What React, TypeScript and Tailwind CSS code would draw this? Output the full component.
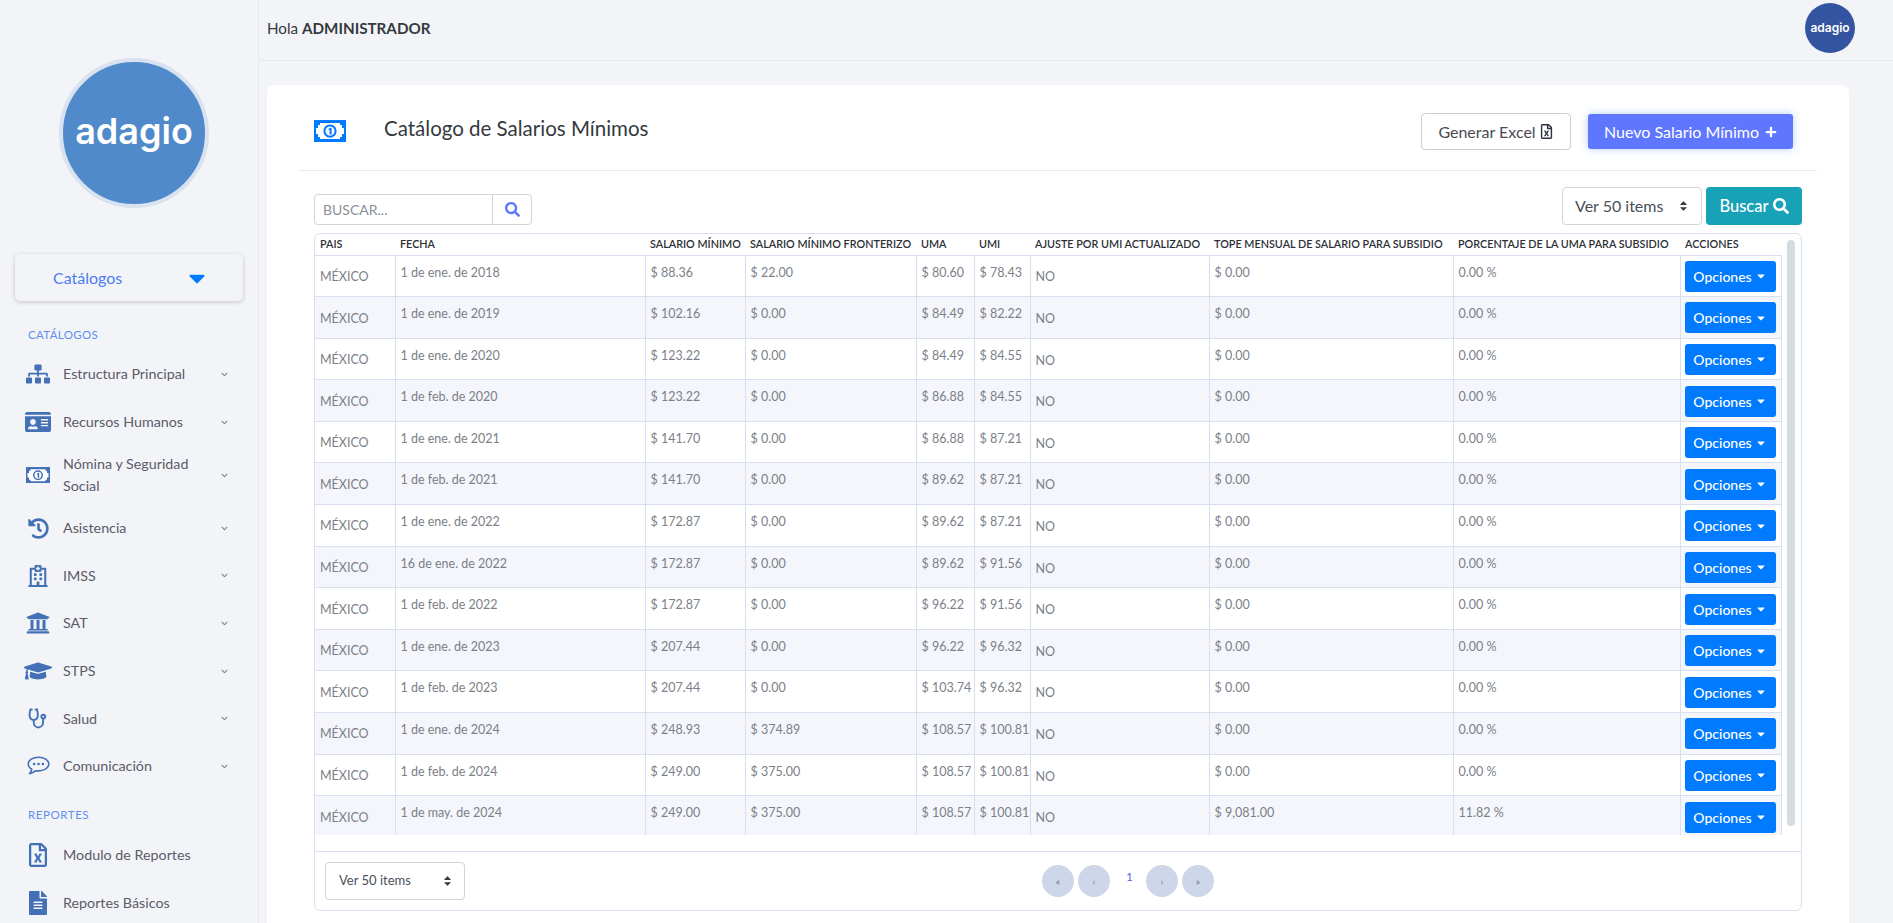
import { ComponentType, ReactNode } from "react";
import {
  FaSitemap,
  FaIdCard,
  FaHistory,
  FaRegHospital,
  FaUniversity,
  FaGraduationCap,
  FaRegFileExcel,
  FaFileAlt,
  FaSearch,
  FaPlus,
  FaCaretDown,
  FaChevronDown,
} from "react-icons/fa";

const FONT = "font-['Lato','Liberation_Sans',sans-serif]";

interface IMenu {
  label: ReactNode;
  icon: ComponentType<{ className?: string }>;
  size: string;
  chevron: boolean;
  height: string;
}

function Bill({ className }: { className?: string }) {
  return (
    <svg viewBox="0 0 32 22" width="1em" height="0.69em" className={className}>
      <rect width="32" height="22" fill="currentColor" />
      <path d="M6 3h20v2h2v3h2v6h-2v3h-2v2H6v-2H4v-3H2V8h2V5h2z" fill="#fff" />
      <circle cx="16" cy="11" r="6.6" fill="currentColor" />
      <circle cx="16" cy="11" r="4.6" fill="#fff" />
      <path d="M14.6 8.6l2-1h1v6.8h-2V9.8l-1 .4z" fill="currentColor" />
    </svg>
  );
}

function Stethoscope({ className }: { className?: string }) {
  return (
    <svg viewBox="0 0 20 22" width="0.91em" height="1em" fill="none" stroke="currentColor" strokeWidth="2" strokeLinecap="round" className={className}>
      <path d="M4 1.6H2.6C2 4 1.4 6 1.6 8c.3 2.6 2.2 4.4 4.4 4.4s4-1.8 4.3-4.4C10.6 6 10 4 9.4 1.6H8" />
      <path d="M6 12.4V15c0 3 2 5.4 4.8 5.4S15.8 18 15.8 15v-3.6" />
      <circle cx="16" cy="9" r="2" />
    </svg>
  );
}

function Speech({ className }: { className?: string }) {
  return (
    <svg viewBox="0 0 24 20" width="1em" height="0.83em" className={className}>
      <path d="M12 1.2C6 1.2 1.2 4.4 1.2 8.4c0 2.2 1.5 4.2 3.8 5.5-.3 1.5-1 2.9-2.4 4.6 2.6-.4 5-1.7 6.6-3.1 1 .2 1.8.2 2.8.2 6 0 10.8-3.2 10.8-7.2S18 1.2 12 1.2z" fill="none" stroke="currentColor" strokeWidth="1.6" strokeLinejoin="round" />
      <circle cx="7.4" cy="8.4" r="1.4" fill="currentColor" />
      <circle cx="12" cy="8.4" r="1.4" fill="currentColor" />
      <circle cx="16.6" cy="8.4" r="1.4" fill="currentColor" />
    </svg>
  );
}

const catalogos: IMenu[] = [
  { label: "Estructura Principal", icon: FaSitemap, size: "text-[24px]", chevron: true, height: "h-[48px]" },
  { label: "Recursos Humanos", icon: FaIdCard, size: "text-[26px]", chevron: true, height: "h-[48px]" },
  { label: <>Nómina y Seguridad<br />Social</>, icon: Bill, size: "text-[24px]", chevron: true, height: "h-[58px]" },
  { label: "Asistencia", icon: FaHistory, size: "text-[21px]", chevron: true, height: "h-[48px]" },
  { label: "IMSS", icon: FaRegHospital, size: "text-[22px]", chevron: true, height: "h-[47px]" },
  { label: "SAT", icon: FaUniversity, size: "text-[24px]", chevron: true, height: "h-[48px]" },
  { label: "STPS", icon: FaGraduationCap, size: "text-[28px]", chevron: true, height: "h-[48px]" },
  { label: "Salud", icon: Stethoscope, size: "text-[21px]", chevron: true, height: "h-[47px]" },
  { label: "Comunicación", icon: Speech, size: "text-[23px]", chevron: true, height: "h-[48px]" },
];

const reportes: IMenu[] = [
  { label: "Modulo de Reportes", icon: FaRegFileExcel, size: "text-[24px]", chevron: false, height: "h-[48px]" },
  { label: "Reportes Básicos", icon: FaFileAlt, size: "text-[24px]", chevron: false, height: "h-[48px]" },
];

const rows = [
  ["1 de ene. de 2018", "88.36", "22.00", "80.60", "78.43", "0.00", "0.00"],
  ["1 de ene. de 2019", "102.16", "0.00", "84.49", "82.22", "0.00", "0.00"],
  ["1 de ene. de 2020", "123.22", "0.00", "84.49", "84.55", "0.00", "0.00"],
  ["1 de feb. de 2020", "123.22", "0.00", "86.88", "84.55", "0.00", "0.00"],
  ["1 de ene. de 2021", "141.70", "0.00", "86.88", "87.21", "0.00", "0.00"],
  ["1 de feb. de 2021", "141.70", "0.00", "89.62", "87.21", "0.00", "0.00"],
  ["1 de ene. de 2022", "172.87", "0.00", "89.62", "87.21", "0.00", "0.00"],
  ["16 de ene. de 2022", "172.87", "0.00", "89.62", "91.56", "0.00", "0.00"],
  ["1 de feb. de 2022", "172.87", "0.00", "96.22", "91.56", "0.00", "0.00"],
  ["1 de ene. de 2023", "207.44", "0.00", "96.22", "96.32", "0.00", "0.00"],
  ["1 de feb. de 2023", "207.44", "0.00", "103.74", "96.32", "0.00", "0.00"],
  ["1 de ene. de 2024", "248.93", "374.89", "108.57", "100.81", "0.00", "0.00"],
  ["1 de feb. de 2024", "249.00", "375.00", "108.57", "100.81", "0.00", "0.00"],
  ["1 de may. de 2024", "249.00", "375.00", "108.57", "100.81", "9,081.00", "11.82"],
];

const columns = [
  { title: "PAIS", width: "w-[80px]" },
  { title: "FECHA", width: "w-[250px]" },
  { title: "SALARIO MÍNIMO", width: "w-[100px]" },
  { title: "SALARIO MÍNIMO FRONTERIZO", width: "w-[171px]" },
  { title: "UMA", width: "w-[58px]" },
  { title: "UMI", width: "w-[56px]" },
  { title: "AJUSTE POR UMI ACTUALIZADO", width: "w-[179px]" },
  { title: "TOPE MENSUAL DE SALARIO PARA SUBSIDIO", width: "w-[244px]" },
  { title: "PORCENTAJE DE LA UMA PARA SUBSIDIO", width: "w-[227px]" },
  { title: "ACCIONES", width: "w-[101px]" },
];

function Logo({ className }: { className: string }) {
  return <span className={`font-['Inter',sans-serif] font-semibold text-white ${className}`}>adagio</span>;
}

function MenuItem({ item }: { item: IMenu }) {
  const Icon = item.icon;
  return (
    <div className={`shrink-0 flex items-center ${item.height}`}>
      <div className={`w-[63px] flex justify-center pl-[13px] text-[#4471b5] ${item.size}`}>
        <Icon />
      </div>
      <div className="w-[155px] text-[14.3px] leading-[22px] text-[#5b5b68]">{item.label}</div>
      {item.chevron && <FaChevronDown className="ml-[3px] text-[7px] text-[#77808c]" />}
    </div>
  );
}

function Sidebar() {
  return (
    <aside className="w-[259px] shrink-0 border-r border-[#e6e8ee] flex flex-col">
      <div className="shrink-0 mt-[58px] ml-[59px] w-[150px] h-[150px] rounded-full bg-[#508aca] border-4 border-[#d9e2f0] flex items-center justify-center">
        <Logo className="text-[36px] leading-none -mt-[4px]" />
      </div>
      <div className="shrink-0 mt-[46px] mx-[15px] h-[47px] rounded-[5px] bg-[#f3f4f8] shadow-[0_1px_4px_rgba(0,0,0,0.2)] flex items-center justify-between pl-[38px] pr-[33px]">
        <span className="text-[16px] text-[#4d7df0]">Catálogos</span>
        <FaCaretDown className="text-[26px] text-[#007bff]" />
      </div>
      <div className="shrink-0 mt-[27px] pl-[28px] text-[11.5px] leading-[14px] tracking-[0.03em] text-[#5e8ff0]">CATÁLOGOS</div>
      <div className="shrink-0 mt-[8px] flex flex-col">
        {catalogos.map((item, i) => (
          <MenuItem key={i} item={item} />
        ))}
      </div>
      <div className="shrink-0 mt-[18px] pl-[28px] text-[11.5px] leading-[14px] tracking-[0.05em] text-[#5e8ff0]">REPORTES</div>
      <div className="shrink-0 mt-[9px] flex flex-col">
        {reportes.map((item, i) => (
          <MenuItem key={i} item={item} />
        ))}
      </div>
    </aside>
  );
}

function Select({ label, className }: { label: string; className: string }) {
  return (
    <div className={`h-[38px] w-[140px] rounded-[4px] border border-[#ced4da] bg-white flex items-center justify-between text-[#495057] ${className}`}>
      <span>{label}</span>
      <span className="flex flex-col items-center">
        <FaCaretDown className="rotate-180 text-[11px] -mb-[6px] text-[#343a40]" />
        <FaCaretDown className="text-[11px] text-[#343a40]" />
      </span>
    </div>
  );
}

function Table() {
  return (
    <div className="h-[601px] overflow-hidden relative">
      <table className="table-fixed border-collapse w-[1466px] text-[12.5px] text-[#7b7f88]">
        <colgroup>
          {columns.map((c) => (
            <col key={c.title} className={c.width} />
          ))}
        </colgroup>
        <thead>
          <tr className="h-[21px]">
            {columns.map((c) => (
              <th key={c.title} className="px-[5px] text-left text-[10.8px] font-semibold whitespace-nowrap text-[#2c2f36] align-middle">
                {c.title}
              </th>
            ))}
          </tr>
        </thead>
        <tbody>
          {rows.map((r, i) => (
            <tr key={i} className={`h-[41.6px] ${i % 2 === 1 ? "bg-[#f4f6fb]" : "bg-white"}`}>
              <td className="border border-[#d8dfee] border-l-0 px-[5px] pt-[3px] align-middle">MÉXICO</td>
              <td className="border border-[#d8dfee] px-[5px] pt-[8px] align-top">{r[0]}</td>
              <td className="border border-[#d8dfee] px-[5px] pt-[8px] align-top">$ {r[1]}</td>
              <td className="border border-[#d8dfee] px-[5px] pt-[8px] align-top">$ {r[2]}</td>
              <td className="border border-[#d8dfee] px-[5px] pt-[8px] align-top whitespace-nowrap">$ {r[3]}</td>
              <td className="border border-[#d8dfee] px-[5px] pt-[8px] align-top whitespace-nowrap">$ {r[4]}</td>
              <td className="border border-[#d8dfee] px-[5px] pt-[4px] align-middle">NO</td>
              <td className="border border-[#d8dfee] px-[5px] pt-[8px] align-top">$ {r[5]}</td>
              <td className="border border-[#d8dfee] px-[5px] pt-[8px] align-top">{r[6]} %</td>
              <td className="border border-[#d8dfee] pl-[4px] pt-[1px] align-middle">
                <button className="h-[31px] w-[91px] rounded-[3px] bg-[#007bff] text-white text-[14px] font-medium flex items-center justify-center gap-[3px]">
                  Opciones
                  <FaCaretDown className="text-[12px]" />
                </button>
              </td>
            </tr>
          ))}
        </tbody>
      </table>
      <div className="absolute top-[6px] left-[1472px] w-[8px] h-[586px] rounded-full bg-[#d5dcdf]" />
    </div>
  );
}

function PageCircle({ label }: { label: string }) {
  return <div className="w-[32px] h-[32px] rounded-full bg-[#ced6e9] flex items-center justify-center text-[10px] text-[#6b7487]">{label}</div>;
}

export default function App() {
  return (
    <div className={`${FONT} h-screen overflow-hidden flex bg-[#f3f4f8]`}>
      <Sidebar />
      <main className="flex-1 min-w-0">
        <header className="h-[61px] border-b border-[#e6e8ee] flex items-center justify-between pl-[8px] pr-[38px]">
          <div className="-mt-[4px] text-[15.2px] text-[#343a40]">
            Hola <span className="font-bold">ADMINISTRADOR</span>
          </div>
          <div className="w-[50px] h-[50px] rounded-full bg-[#3354a0] flex items-center justify-center -mt-[5px]">
            <Logo className="text-[12px] leading-none" />
          </div>
        </header>
        <section className="mt-[24px] ml-[8px] w-[1582px] h-[900px] rounded-[8px] bg-white px-[32px]">
          <div className="h-[86px] border-b border-[#e6e8ee] flex pl-[15px] pr-[24px]">
            <Bill className="mt-[35px] text-[32px] text-[#007bff]" />
            <h1 className="ml-[38px] mt-[27px] text-[20.5px] leading-[32px] text-[#343a40]">Catálogo de Salarios Mínimos</h1>
            <div className="ml-auto mt-[28px] flex items-start gap-[17px]">
              <button className="h-[37px] w-[150px] rounded-[4px] border border-[#ccc] bg-white text-[16px] text-[#4a4a52] flex items-center justify-center gap-[3px]">
                Generar Excel <FaRegFileExcel className="text-[15px] text-[#2c3440]" />
              </button>
              <button className="mt-[1px] h-[35px] w-[205px] rounded-[3px] bg-[#5f76ff] shadow-[0_0_8px_rgba(95,150,255,0.45)] text-white text-[16px] flex items-center justify-center gap-[6px]">
                Nuevo Salario Mínimo <FaPlus className="text-[12px]" />
              </button>
            </div>
          </div>
          <div className="mt-[16px] mx-[15px] flex items-end justify-between">
            <div className="flex h-[31px] w-[218px] rounded-[4px] border border-[#ced4da]">
              <div className="w-[178px] px-[8px] text-[14px] leading-[29px] text-[#8a8f98] border-r border-[#ced4da]">BUSCAR...</div>
              <div className="flex-1 flex items-center justify-center">
                <FaSearch className="text-[15px] text-[#5f76ff]" />
              </div>
            </div>
            <div className="flex gap-[4px]">
              <Select label="Ver 50 items" className="px-[12px] text-[16px]" />
              <button className="h-[38px] w-[96px] rounded-[4px] bg-[#17a2b8] text-white text-[16.5px] font-medium flex items-center justify-center gap-[4px]">
                Buscar <FaSearch className="text-[16px]" />
              </button>
            </div>
          </div>
          <div className="mt-[8px] mx-[15px] h-[678px] rounded-[6px] border border-[#d8dfee] overflow-hidden">
            <Table />
            <div className="mt-[16px] h-[59px] border-t border-[#d8dfee] flex items-center pl-[10px] relative">
              <Select label="Ver 50 items" className="pl-[13px] pr-[11px] text-[13px]" />
              <div className="ml-[577px] flex items-center gap-[4px]">
                <PageCircle label="«" />
                <PageCircle label="‹" />
                <div className="w-[28px] pl-[3px] text-center text-[11px] text-[#4a5cf0] -mt-[8px]">1</div>
                <PageCircle label="›" />
                <PageCircle label="»" />
              </div>
            </div>
          </div>
        </section>
      </main>
    </div>
  );
}
